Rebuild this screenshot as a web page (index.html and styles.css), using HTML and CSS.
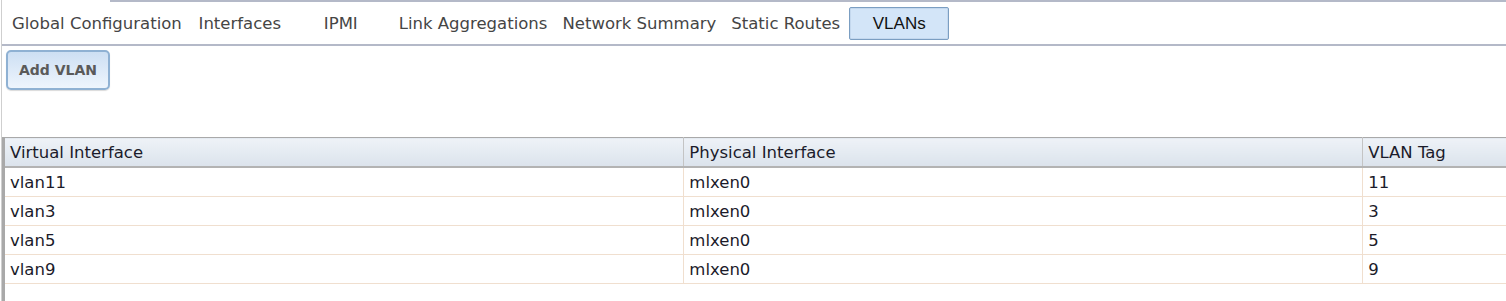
FILE: index.html
```html
<!DOCTYPE html>
<html>
<head>
<meta charset="utf-8">
<link rel="stylesheet" href="styles.css">
</head>
<body>
<div class="page">
  <div class="topline"></div>
  <nav class="tabs">
    <span class="tab">Global Configuration</span>
    <span class="tab">Interfaces</span>
    <span class="tab">IPMI</span>
    <span class="tab">Link Aggregations</span>
    <span class="tab">Network Summary</span>
    <span class="tab">Static Routes</span>
    <span class="tab active">VLANs</span>
  </nav>
  <div class="toolbar">
    <button class="btn">Add VLAN</button>
  </div>
  <div class="grid">
    <table>
      <thead>
        <tr><th>Virtual Interface</th><th>Physical Interface</th><th>VLAN Tag</th></tr>
      </thead>
      <tbody>
        <tr><td>vlan11</td><td>mlxen0</td><td>11</td></tr>
        <tr><td>vlan3</td><td>mlxen0</td><td>3</td></tr>
        <tr><td>vlan5</td><td>mlxen0</td><td>5</td></tr>
        <tr><td>vlan9</td><td>mlxen0</td><td>9</td></tr>
      </tbody>
    </table>
  </div>
</div>
</body>
</html>
```

FILE: styles.css
```css
html, body {
  margin: 0;
  padding: 0;
  background: #fff;
  overflow: hidden;
}
body {
  font-family: "DejaVu Sans", Verdana, sans-serif;
  color: #1b1b2a;
}
.page {
  margin-left: 1px;
  border-left: 1px solid #cfcfcf;
  height: 301px;
  width: 1600px;
}
.topline {
  height: 2px;
  margin-left: 108px;
  background: #b4b9c8;
}
.tabs {
  display: flex;
  align-items: center;
  gap: 1px;
  height: 42px;
  padding-left: 3px;
  border-bottom: 2px solid #b4b9c8;
  width: 1502px;
}
.tab {
  box-sizing: border-box;
  min-width: 100px;
  padding: 0 7px;
  text-align: center;
  font-size: 16.5px;
  color: #454545;
  white-space: nowrap;
}
.tab.active {
  height: 33px;
  line-height: 31px;
  margin-left: 1px;
  font-family: "Liberation Sans", Arial, sans-serif;
  font-size: 17px;
  color: #111;
  background: #d3e5f8;
  border: 1px solid #7b9ec2;
  border-radius: 2px;
  box-shadow: inset 0 0 0 1px #c4d8ee;
}
.toolbar {
  padding: 4px 0 0 4px;
  height: 91px;
  box-sizing: border-box;
}
.btn {
  width: 104px;
  height: 40px;
  border: 2px solid #8fb1d3;
  border-radius: 5px;
  background: linear-gradient(#cddff3, #eef5fd);
  font-family: "DejaVu Sans", Verdana, sans-serif;
  font-weight: bold;
  font-size: 14px;
  color: #5a5a5a;
  padding: 0;
  box-shadow: 0 1px 1px rgba(0,0,0,0.15);
}
.grid {
  border-left: 3px solid #a9a9a9;
  height: 164px;
}
table {
  border-collapse: collapse;
  width: 2037px;
  table-layout: fixed;
}
th, td {
  text-align: left;
  font-weight: normal;
  font-size: 16.5px;
  padding: 0 0 0 5px;
  white-space: nowrap;
}
th {
  height: 28px;
  background: linear-gradient(#eef2f7, #dbe3ec);
  border-top: 1px solid #a9a9a9;
  border-bottom: 2px solid #b3b3b3;
  border-right: 1px solid #c4c4c4;
  color: #1b1b2a;
}
td {
  height: 28px;
  border-bottom: 1px solid #f0dfcf;
  border-right: 1px solid #f0dfcf;
}
```
